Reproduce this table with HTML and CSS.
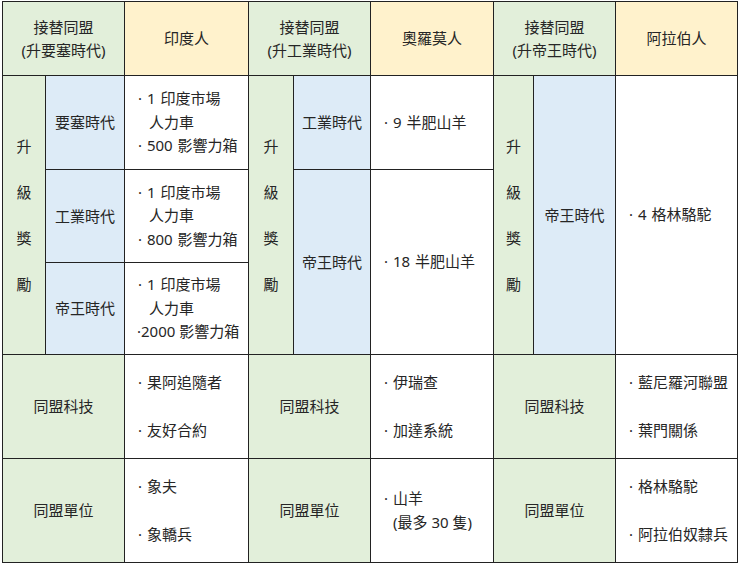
FILE: index.html
```html
<!DOCTYPE html>
<html lang="zh-Hant">
<head>
<meta charset="utf-8">
<link rel="stylesheet" href="styles.css">
</head>
<body>
<div class="sheet">
  <div class="cell green span2">接替同盟<br>(升要塞時代)</div>
  <div class="cell orange">印度人</div>
  <div class="cell green span2">接替同盟<br>(升工業時代)</div>
  <div class="cell orange">奧羅莫人</div>
  <div class="cell green span2">接替同盟<br>(升帝王時代)</div>
  <div class="cell orange">阿拉伯人</div>

  <div class="cell green rows3 vert"><span>升</span><span>級</span><span>獎</span><span>勵</span></div>
  <div class="cell blue">要塞時代</div>
  <div class="cell white list"><div>· 1 印度市場</div><div class="cont">人力車</div><div>· 500 影響力箱</div></div>
  <div class="cell green rows3 vert"><span>升</span><span>級</span><span>獎</span><span>勵</span></div>
  <div class="cell blue">工業時代</div>
  <div class="cell white list"><div>· 9 半肥山羊</div></div>
  <div class="cell green rows3 vert"><span>升</span><span>級</span><span>獎</span><span>勵</span></div>
  <div class="cell blue rows3">帝王時代</div>
  <div class="cell white list rows3"><div>· 4 格林駱駝</div></div>

  <div class="cell blue">工業時代</div>
  <div class="cell white list"><div>· 1 印度市場</div><div class="cont">人力車</div><div>· 800 影響力箱</div></div>
  <div class="cell blue rows2">帝王時代</div>
  <div class="cell white list rows2"><div>· 18 半肥山羊</div></div>

  <div class="cell blue">帝王時代</div>
  <div class="cell white list"><div>· 1 印度市場</div><div class="cont">人力車</div><div class="tight">·2000 影響力箱</div></div>

  <div class="cell green span2">同盟科技</div>
  <div class="cell white list gap"><div>· 果阿追隨者</div><div>· 友好合約</div></div>
  <div class="cell green span2">同盟科技</div>
  <div class="cell white list gap"><div>· 伊瑞查</div><div>· 加達系統</div></div>
  <div class="cell green span2">同盟科技</div>
  <div class="cell white list gap"><div>· 藍尼羅河聯盟</div><div>· 葉門關係</div></div>

  <div class="cell green span2">同盟單位</div>
  <div class="cell white list gap"><div>· 象夫</div><div>· 象轎兵</div></div>
  <div class="cell green span2">同盟單位</div>
  <div class="cell white list"><div>· 山羊</div><div class="paren">(最多 30 隻)</div></div>
  <div class="cell green span2">同盟單位</div>
  <div class="cell white list gap"><div>· 格林駱駝</div><div>· 阿拉伯奴隸兵</div></div>
</div>
</body>
</html>
```

FILE: styles.css
```css
html, body {
  margin: 0;
  padding: 0;
  background: #ffffff;
}

body {
  font-family: "Noto Sans", "Noto Sans CJK TC", sans-serif;
  font-size: 15px;
  color: #262626;
}

.sheet {
  display: grid;
  grid-template-columns: 42px 78px 123px 44px 76px 122px 39px 81px 121px;
  grid-template-rows: 73px 93px 92px 91px 103px 103px;
  gap: 1px;
  padding: 1px;
  background: #222222;
  width: max-content;
  margin: 1px 0 0 2px;
}

.cell {
  display: flex;
  flex-direction: column;
  align-items: center;
  justify-content: center;
  text-align: center;
  line-height: 23px;
}

.green { background: #e2efda; }
.orange { background: #fff2cc; }
.blue { background: #ddebf7; }
.white { background: #ffffff; }

.span2 { grid-column: span 2; }
.rows2 { grid-row: span 2; }
.rows3 { grid-row: span 3; }

.vert span {
  display: block;
  line-height: 46px;
}

.list {
  align-items: flex-start;
  text-align: left;
  padding-left: 13px;
  line-height: 23.5px;
  word-spacing: 1px;
}

.list .cont {
  padding-left: 11px;
}

.list .tight {
  margin-left: -1px;
  word-spacing: 0;
}

.list .paren {
  padding-left: 9px;
  word-spacing: 0;
}

.gap {
  gap: 24px;
}
```
